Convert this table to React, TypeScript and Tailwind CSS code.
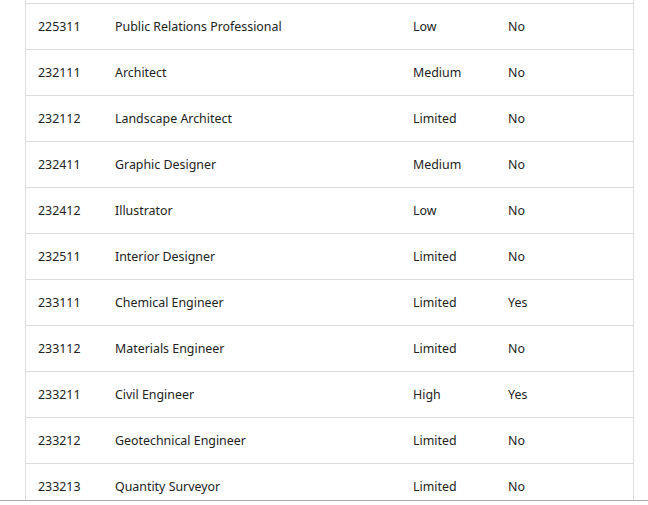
import React from 'react';

const rows = [
  ['225311', 'Public Relations Professional', 'Low', 'No'],
  ['232111', 'Architect', 'Medium', 'No'],
  ['232112', 'Landscape Architect', 'Limited', 'No'],
  ['232411', 'Graphic Designer', 'Medium', 'No'],
  ['232412', 'Illustrator', 'Low', 'No'],
  ['232511', 'Interior Designer', 'Limited', 'No'],
  ['233111', 'Chemical Engineer', 'Limited', 'Yes'],
  ['233112', 'Materials Engineer', 'Limited', 'No'],
  ['233211', 'Civil Engineer', 'High', 'Yes'],
  ['233212', 'Geotechnical Engineer', 'Limited', 'No'],
  ['233213', 'Quantity Surveyor', 'Limited', 'No'],
];

export default function App() {
  return (
    <div className="w-[648px] h-[505px] bg-white font-['Noto_Sans',sans-serif] text-[12.4px] text-[#222]">
      <div className="h-[501px] overflow-hidden border-b border-[#a9a9a9] pl-[25px]">
        <div className="w-[609px] h-full border-x border-[#dcdcdc] pt-[3px]">
          <div className="border-t border-[#dcdcdc]">
            {rows.map(([code, title, level, flag]) => (
              <div key={code} className="flex items-center h-[46px] pt-[2px] border-b border-[#dcdcdc]">
                <span className="w-[89px] pl-[12px]">{code}</span>
                <span className="w-[298px]">{title}</span>
                <span className="w-[95px]">{level}</span>
                <span>{flag}</span>
              </div>
            ))}
          </div>
        </div>
      </div>
    </div>
  );
}
